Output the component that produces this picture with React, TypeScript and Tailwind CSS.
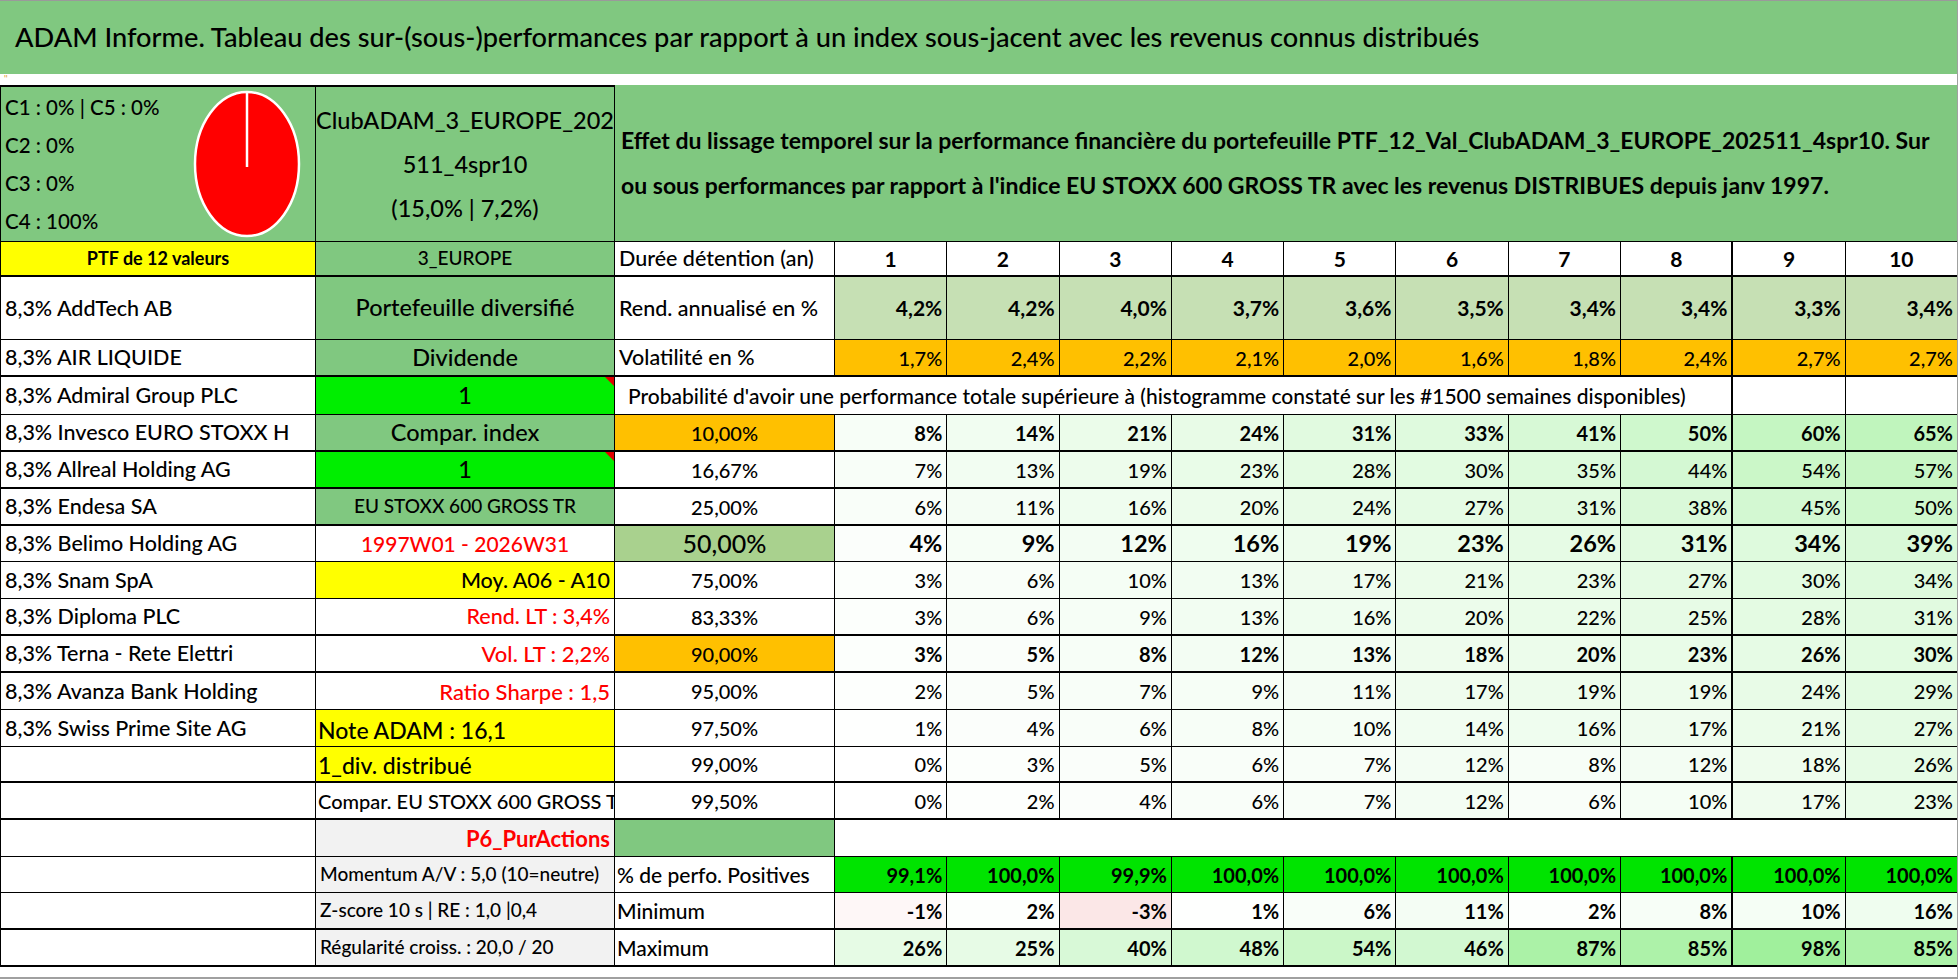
import { ReactNode } from 'react'

const FONT = "font-['Lato','Roboto',sans-serif]"

// column widths (px), taken from the sheet
const A = 'w-[316px] shrink-0'
const B = 'w-[299px] shrink-0'
const C = 'w-[220px] shrink-0'
const D = 'w-[112.3px] shrink-0'

function greenScale(v: number) {
  const t = Math.max(0, Math.min(1, v / 100))
  const r = Math.round(255 - t * (255 - 158))
  const g = Math.round(255 - t * (255 - 240))
  const b = Math.round(255 - t * (255 - 154))
  return `rgb(${r}, ${g}, ${b})`
}

function redScale(v: number) {
  const t = Math.max(0, Math.min(1, Math.abs(v) / 8))
  const r = Math.round(255 - t * (255 - 245))
  const g = Math.round(255 - t * (255 - 190))
  return `rgb(${r}, ${g}, ${g})`
}

function Cell({
  w,
  br = 'border-r',
  className = '',
  bg,
  children,
}: {
  w: string
  br?: string
  className?: string
  bg?: string
  children?: ReactNode
}) {
  return (
    <div
      className={`${w} ${br} relative flex h-full items-center overflow-hidden whitespace-nowrap border-black ${className}`}
      style={bg ? { backgroundColor: bg } : undefined}
    >
      {children}
    </div>
  )
}

function Row({ h, thick, children }: { h: string; thick?: boolean; children: ReactNode }) {
  return <div className={`flex ${h} ${thick ? 'border-b-2' : 'border-b'} border-black`}>{children}</div>
}

function Flag() {
  return (
    <span className="absolute right-0 top-0 h-0 w-0 border-l-[9px] border-t-[9px] border-l-transparent border-t-[#e00000]" />
  )
}

function DataCells({
  values,
  className = '',
  color,
}: {
  values: (string | number)[]
  className?: string
  color?: (v: number, i: number) => string | undefined
}) {
  return (
    <>
      {values.map((v, i) => (
        <Cell
          key={i}
          w={i === 9 ? 'min-w-0 flex-1' : D}
          br={i === 7 ? 'border-r-2' : i === 9 ? '' : 'border-r'}
          className={`justify-end pr-[4px] ${className}`}
          bg={color ? color(typeof v === 'number' ? v : parseFloat(String(v)), i) : undefined}
        >
          {typeof v === 'number' ? `${v}%` : v}
        </Cell>
      ))}
    </>
  )
}

interface ProbRow {
  a?: string
  b: ReactNode
  bCls: string
  p: string
  pCls: string
  values: number[]
  dataCls: string
  h: string
  thick?: boolean
}

const probRows: ProbRow[] = [
  {
    a: '8,3% Invesco EURO STOXX H',
    b: 'Compar. index',
    bCls: 'justify-center bg-[#80c880] text-[23.5px]',
    p: '10,00%',
    pCls: 'bg-[#ffc000]',
    values: [8, 14, 21, 24, 31, 33, 41, 50, 60, 65],
    dataCls: 'font-bold text-[20px]',
    h: 'h-[37px]',
    thick: true,
  },
  {
    a: '8,3% Allreal Holding AG',
    b: (
      <>
        1
        <Flag />
      </>
    ),
    bCls: 'justify-center bg-[#00ee00] text-[23.5px]',
    p: '16,67%',
    pCls: '',
    values: [7, 13, 19, 23, 28, 30, 35, 44, 54, 57],
    dataCls: 'text-[20px]',
    h: 'h-[37px]',
    thick: true,
  },
  {
    a: '8,3% Endesa SA',
    b: 'EU STOXX 600 GROSS TR',
    bCls: 'justify-center bg-[#80c880] text-[19px]',
    p: '25,00%',
    pCls: '',
    values: [6, 11, 16, 20, 24, 27, 31, 38, 45, 50],
    dataCls: 'text-[20px]',
    h: 'h-[37px]',
    thick: true,
  },
  {
    a: '8,3% Belimo Holding AG',
    b: '1997W01 - 2026W31',
    bCls: 'justify-center text-[21px] text-[#ff0000]',
    p: '50,00%',
    pCls: 'bg-[#a9d18e] text-[25px]',
    values: [4, 9, 12, 16, 19, 23, 26, 31, 34, 39],
    dataCls: 'font-bold text-[23.5px]',
    h: 'h-[36px]',
  },
  {
    a: '8,3% Snam SpA',
    b: 'Moy. A06 - A10',
    bCls: 'justify-end bg-[#ffff00] pr-[4px] text-[21.5px]',
    p: '75,00%',
    pCls: '',
    values: [3, 6, 10, 13, 17, 21, 23, 27, 30, 34],
    dataCls: 'text-[20px]',
    h: 'h-[37px]',
  },
  {
    a: '8,3% Diploma PLC',
    b: 'Rend. LT : 3,4%',
    bCls: 'justify-end pr-[4px] text-[21.5px] text-[#ff0000]',
    p: '83,33%',
    pCls: '',
    values: [3, 6, 9, 13, 16, 20, 22, 25, 28, 31],
    dataCls: 'text-[20px]',
    h: 'h-[37px]',
    thick: true,
  },
  {
    a: '8,3% Terna - Rete Elettri',
    b: 'Vol. LT : 2,2%',
    bCls: 'justify-end pr-[4px] text-[22px] text-[#ff0000]',
    p: '90,00%',
    pCls: 'bg-[#ffc000]',
    values: [3, 5, 8, 12, 13, 18, 20, 23, 26, 30],
    dataCls: 'font-bold text-[20px]',
    h: 'h-[37px]',
    thick: true,
  },
  {
    a: '8,3% Avanza Bank Holding',
    b: 'Ratio Sharpe : 1,5',
    bCls: 'justify-end pr-[4px] text-[22px] text-[#ff0000]',
    p: '95,00%',
    pCls: '',
    values: [2, 5, 7, 9, 11, 17, 19, 19, 24, 29],
    dataCls: 'text-[20px]',
    h: 'h-[37px]',
  },
  {
    a: '8,3% Swiss Prime Site AG',
    b: 'Note ADAM : 16,1',
    bCls: 'items-end bg-[#ffff00] pl-[2px] text-[23px] leading-[31px]',
    p: '97,50%',
    pCls: '',
    values: [1, 4, 6, 8, 10, 14, 16, 17, 21, 27],
    dataCls: 'text-[20px]',
    h: 'h-[37px]',
  },
  {
    b: '1_div. distribué',
    bCls: 'items-end bg-[#ffff00] pl-[2px] text-[23px] leading-[31px]',
    p: '99,00%',
    pCls: '',
    values: [0, 3, 5, 6, 7, 12, 8, 12, 18, 26],
    dataCls: 'text-[20px]',
    h: 'h-[36px]',
    thick: true,
  },
  {
    b: 'Compar. EU STOXX 600 GROSS TR',
    bCls: 'pl-[2px] text-[20px]',
    p: '99,50%',
    pCls: '',
    values: [0, 2, 4, 6, 7, 12, 6, 10, 17, 23],
    dataCls: 'text-[20px]',
    h: 'h-[37px]',
    thick: true,
  },
]

export default function App() {
  return (
    <div
      className={`${FONT} relative h-[979px] w-[1958px] overflow-hidden border-b-2 border-r border-[#a0a0a0] bg-white font-medium text-black`}
    >
      {/* Title */}
      <div className="flex h-[74px] items-center whitespace-nowrap border-t border-[#9a9a9a] bg-[#80c880] pl-[15px] text-[27.2px]">
        ADAM Informe. Tableau des sur-(sous-)performances par rapport à un index sous-jacent avec les revenus connus distribués
      </div>
      <div className="h-[11px] pl-[4px] text-[9px] leading-[10px] text-[#e0a030]">''</div>

      {/* Top block */}
      <div className="flex h-[157px] border-b border-black">
        <div className={`${A} flex h-full items-center border-l border-r border-t-2 border-black bg-[#80c880]`}>
          <div className="flex flex-col pl-[4px] text-[20.5px] leading-[38px]">
            <span>C1 : 0% | C5 : 0%</span>
            <span>C2 : 0%</span>
            <span>C3 : 0%</span>
            <span>C4 : 100%</span>
          </div>
          <svg className="ml-auto mr-[14px]" width="108" height="150" viewBox="0 0 108 150">
            <ellipse cx="54" cy="75" rx="52" ry="72" fill="#ff0000" stroke="#ffffff" strokeWidth="2.5" />
            <line x1="54" y1="3" x2="54" y2="78" stroke="#ffffff" strokeWidth="2.5" />
          </svg>
        </div>
        <div
          className={`${B} flex h-full flex-col items-center justify-center whitespace-nowrap border-r border-t-2 border-black bg-[#80c880] text-[23.5px] leading-[44px]`}
        >
          <span>ClubADAM_3_EUROPE_202</span>
          <span>511_4spr10</span>
          <span>(15,0% | 7,2%)</span>
        </div>
        <div className="flex h-full min-w-0 flex-1 items-center whitespace-nowrap bg-[#80c880] pl-[6px] text-[23px] font-bold leading-[45px]">
          <p>
            Effet du lissage temporel sur la performance financière du portefeuille PTF_12_Val_ClubADAM_3_EUROPE_202511_4spr10. Sur
            <br />
            ou sous performances par rapport à l'indice EU STOXX 600 GROSS TR avec les revenus DISTRIBUES depuis janv 1997.
          </p>
        </div>
      </div>

      {/* Header */}
      <Row h="h-[35px]" thick>
        <Cell w={A} className="justify-center border-l bg-[#ffff00] text-[18px] font-bold">
          PTF de 12 valeurs
        </Cell>
        <Cell w={B} className="justify-center bg-[#80c880] text-[19px]">
          3_EUROPE
        </Cell>
        <Cell w={C} className="pl-[4px] text-[21.5px]">
          Durée détention (an)
        </Cell>
        {[1, 2, 3, 4, 5, 6, 7, 8, 9, 10].map((n, i) => (
          <Cell
            key={n}
            w={i === 9 ? 'min-w-0 flex-1' : D}
            br={i === 7 ? 'border-r-2' : i === 9 ? '' : 'border-r'}
            className="justify-center text-[21px] font-bold"
          >
            {n}
          </Cell>
        ))}
      </Row>

      {/* Rendement */}
      <Row h="h-[63px]">
        <Cell w={A} className="border-l pl-[4px] text-[21.5px]">
          8,3% AddTech AB
        </Cell>
        <Cell w={B} className="justify-center bg-[#80c880] text-[23.5px]">
          Portefeuille diversifié
        </Cell>
        <Cell w={C} className="pl-[4px] text-[21.5px]">
          Rend. annualisé en %
        </Cell>
        <DataCells
          values={['4,2%', '4,2%', '4,0%', '3,7%', '3,6%', '3,5%', '3,4%', '3,4%', '3,3%', '3,4%']}
          className="bg-[#c6e0b4] text-[21px] font-bold"
        />
      </Row>

      {/* Volatilité */}
      <Row h="h-[37px]" thick>
        <Cell w={A} className="border-l pl-[4px] text-[21.5px]">
          8,3% AIR LIQUIDE
        </Cell>
        <Cell w={B} className="justify-center bg-[#80c880] text-[23.5px]">
          Dividende
        </Cell>
        <Cell w={C} className="pl-[4px] text-[21.5px]">
          Volatilité en %
        </Cell>
        <DataCells
          values={['1,7%', '2,4%', '2,2%', '2,1%', '2,0%', '1,6%', '1,8%', '2,4%', '2,7%', '2,7%']}
          className="bg-[#ffc000] text-[20px]"
        />
      </Row>

      {/* Probabilité header */}
      <Row h="h-[38px]">
        <Cell w={A} className="border-l pl-[4px] text-[21.5px]">
          8,3% Admiral Group PLC
        </Cell>
        <Cell w={B} className="justify-center bg-[#00ee00] text-[23.5px]">
          1
          <Flag />
        </Cell>
        <Cell w="w-[1118.4px] shrink-0" br="border-r-2" className="pl-[13px] text-[21px]">
          Probabilité d'avoir une performance totale supérieure à (histogramme constaté sur les #1500 semaines disponibles)
        </Cell>
        <Cell w={D} />
        <Cell w="min-w-0 flex-1" br="" />
      </Row>

      {probRows.map((r, idx) => (
        <Row key={idx} h={r.h} thick={r.thick}>
          <Cell w={A} className="border-l pl-[4px] text-[21.5px]">
            {r.a}
          </Cell>
          <Cell w={B} className={r.bCls}>
            {r.b}
          </Cell>
          <Cell w={C} className={`justify-center text-[20px] ${r.pCls}`}>
            {r.p}
          </Cell>
          <DataCells values={r.values} className={r.dataCls} color={(v) => greenScale(v)} />
        </Row>
      ))}

      {/* P6 */}
      <Row h="h-[37px]">
        <Cell w={A} className="border-l" />
        <Cell w={B} className="justify-end bg-[#f2f2f2] pr-[4px] text-[22px] font-bold text-[#ff0000]">
          P6_PurActions
        </Cell>
        <Cell w={C} className="bg-[#80c880]" />
        <div className="flex-1" />
      </Row>

      <Row h="h-[36px]">
        <Cell w={A} className="border-l" />
        <Cell w={B} className="bg-[#f2f2f2] pl-[4px] text-[19px]">
          Momentum A/V : 5,0 (10=neutre)
        </Cell>
        <Cell w={C} className="pl-[2px] text-[21px]">
          % de perfo. Positives
        </Cell>
        <DataCells
          values={['99,1%', '100,0%', '99,9%', '100,0%', '100,0%', '100,0%', '100,0%', '100,0%', '100,0%', '100,0%']}
          className="bg-[#00e400] text-[20px] font-bold"
        />
      </Row>

      <Row h="h-[37px]" thick>
        <Cell w={A} className="border-l" />
        <Cell w={B} className="bg-[#f2f2f2] pl-[4px] text-[19px]">
          Z-score 10 s | RE : 1,0 |0,4
        </Cell>
        <Cell w={C} className="pl-[2px] text-[21px]">
          Minimum
        </Cell>
        <DataCells
          values={[-1, 2, -3, 1, 6, 11, 2, 8, 10, 16]}
          className="text-[20px] font-bold"
          color={(v) => (v < 0 ? redScale(v) : greenScale(v))}
        />
      </Row>

      <Row h="h-[37px]" thick>
        <Cell w={A} className="border-l" />
        <Cell w={B} className="bg-[#f2f2f2] pl-[4px] text-[19px]">
          Régularité croiss. : 20,0 / 20
        </Cell>
        <Cell w={C} className="pl-[2px] text-[21px]">
          Maximum
        </Cell>
        <DataCells
          values={[26, 25, 40, 48, 54, 46, 87, 85, 98, 85]}
          className="text-[20px] font-bold"
          color={(v) => greenScale(v)}
        />
      </Row>
    </div>
  )
}
